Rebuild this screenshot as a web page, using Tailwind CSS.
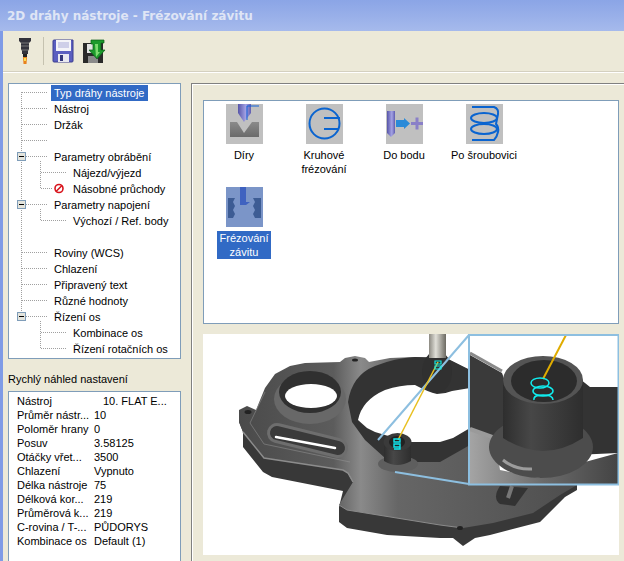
<!DOCTYPE html>
<html lang="cs">
<head>
    <meta charset="UTF-8">
    <title>2D dráhy nástroje - Frézování závitu</title>
    <script src="https://cdn.jsdelivr.net/npm/@tailwindcss/browser@4"></script>
</head>
<body class="bg-[#ece9d8]">
<div class="w-[624px] h-[561px] overflow-hidden flex flex-col bg-[#ece9d8] font-['Liberation_Sans',sans-serif] text-[11px] text-black">

    <!-- Title bar -->
    <div class="h-[31px] shrink-0 pl-[7px] flex items-center bg-gradient-to-b from-[#8ba5e6] via-[#98afe9] to-[#a6baec] font-['DejaVu_Sans',sans-serif] font-bold text-[12px] text-[#dfe5f5]">2D dráhy nástroje - Frézování závitu</div>

    <div class="flex-1 min-h-0 flex border-l-[3px] border-[#7f9be6]">
        <div class="flex-1 min-w-0 flex flex-col">

            <!-- Toolbar -->
            <div class="h-[41px] shrink-0 flex items-center border-b border-[#d4d0c0] shadow-[0_1px_0_#fff] pl-[15px]">
                <svg width="14" height="28" viewBox="0 0 14 28">
                    <path d="M1 1h12v3l-2 2v6l-1 2v3H4v-3l-1-2V6L1 4z" fill="#33333b"/>
                    <path d="M3 6h8M3 9h8M4 13h6" stroke="#777" stroke-width="1"/>
                    <path d="M5 17h4v3h-4z" fill="#222"/>
                    <path d="M5 20h4l-.5 7h-3z" fill="#e8821e"/>
                    <path d="M6 21h2v3H6z" fill="#f8e050"/>
                </svg>
                <div class="w-px h-[28px] bg-[#c5c2b0] ml-[11px] mr-[8px]"></div>
                <svg width="22" height="24" viewBox="0 0 22 24">
                    <path d="M1 2q0-1 1-1h19v21q0 1-1 1H2q-1 0-1-1z" fill="#5b5fc0" stroke="#3c3f90"/>
                    <rect x="4" y="1" width="15" height="11" fill="#f4f4f8"/>
                    <path d="M6 4h11M6 6h11M6 8h11" stroke="#a9aad8"/>
                    <rect x="6" y="15" width="11" height="8" fill="#e8e8f0"/>
                    <rect x="8" y="16" width="3" height="6" fill="#33367a"/>
                </svg>
                <svg class="ml-[8px]" width="24" height="25" viewBox="0 0 24 25">
                    <path d="M1 4h20v20H1z" fill="#2a2a2a"/>
                    <rect x="5" y="5" width="12" height="9" fill="#e4e4e4"/>
                    <rect x="6" y="17" width="10" height="7" fill="#8a8a8a"/>
                    <path d="M9 1h13v3l-3 0v7h4l-8 9-8-9h4V5H9z" fill="#1d9a2c" stroke="#0d5c18" stroke-width=".7"/>
                    <path d="M13 5h3v8h2l-4 5z" fill="#7ddc70"/>
                </svg>
            </div>

            <div class="flex-1 min-h-0 flex pt-[11px] pl-[5px]">

                <!-- Left column -->
                <div class="w-[173px] shrink-0 flex flex-col">
                    <div class="relative h-[276px] shrink-0 bg-white border border-[#7f9db9] pt-px leading-[16px]">
                        <svg class="absolute left-0 top-0" width="171" height="274" viewBox="9 84 171 274" fill="none">
                            <g stroke="#a0a0a0" stroke-dasharray="1 1">
                                <path d="M21.5 92V316"/>
                                <path d="M22 92.5H48M22 108.5H48M22 124.5H48M22 140.5H48M26 156.5H48M22 252.5H48M22 268.5H48M22 284.5H48M22 300.5H48M26 204.5H48M26 316.5H48"/>
                                <path d="M40.5 161V188M40.5 209V220M40.5 321V348"/>
                                <path d="M41 172.5H67M41 188.5H52M41 220.5H67M41 332.5H67M41 348.5H67"/>
                            </g>
                            <g>
                                <rect x="17.5" y="152.5" width="8" height="8" fill="#e4e4dc" stroke="#7f9db9"/>
                                <path d="M19 156.5h5" stroke="#000"/>
                                <rect x="17.5" y="200.5" width="8" height="8" fill="#e4e4dc" stroke="#7f9db9"/>
                                <path d="M19 204.5h5" stroke="#000"/>
                                <rect x="17.5" y="312.5" width="8" height="8" fill="#e4e4dc" stroke="#7f9db9"/>
                                <path d="M19 316.5h5" stroke="#000"/>
                            </g>
                            <circle cx="59" cy="188.5" r="4" stroke="#d8141c" stroke-width="1.6"/>
                            <path d="M56 191.5l6-6" stroke="#d8141c" stroke-width="1.6"/>
                        </svg>
                        <div class="relative h-[16px] pl-[42px]"><span class="inline-block px-[3px] bg-[#316ac5] text-white">Typ dráhy nástroje</span></div>
                        <div class="relative h-[16px] pl-[45px]">Nástroj</div>
                        <div class="relative h-[16px] pl-[45px]">Držák</div>
                        <div class="relative h-[16px] pl-[45px]"></div>
                        <div class="relative h-[16px] pl-[45px]">Parametry obrábění</div>
                        <div class="relative h-[16px] pl-[64px]">Nájezd/výjezd</div>
                        <div class="relative h-[16px] pl-[64px]">Násobné průchody</div>
                        <div class="relative h-[16px] pl-[45px]">Parametry napojení</div>
                        <div class="relative h-[16px] pl-[64px]">Výchozí / Ref. body</div>
                        <div class="relative h-[16px] pl-[45px]"></div>
                        <div class="relative h-[16px] pl-[45px]">Roviny (WCS)</div>
                        <div class="relative h-[16px] pl-[45px]">Chlazení</div>
                        <div class="relative h-[16px] pl-[45px]">Připravený text</div>
                        <div class="relative h-[16px] pl-[45px]">Různé hodnoty</div>
                        <div class="relative h-[16px] pl-[45px]">Řízení os</div>
                        <div class="relative h-[16px] pl-[64px]">Kombinace os</div>
                        <div class="relative h-[16px] pl-[64px]">Řízení rotačních os</div>
                    </div>

                    <div class="h-[32px] shrink-0 flex items-end pb-[4px]">Rychlý náhled nastavení</div>

                    <div class="flex-1 bg-white border border-b-0 border-[#7f9db9] pl-[8px] pt-[2px] leading-[14px] grid grid-cols-[77px_1fr] auto-rows-[14px]">
                        <div>Nástroj</div><div class="pl-[9px]">10. FLAT E...</div>
                        <div>Průměr nástr...</div><div>10</div>
                        <div>Poloměr hrany</div><div>0</div>
                        <div>Posuv</div><div>3.58125</div>
                        <div>Otáčky vřet...</div><div>3500</div>
                        <div>Chlazení</div><div>Vypnuto</div>
                        <div>Délka nástroje</div><div>75</div>
                        <div>Délková kor...</div><div>219</div>
                        <div>Průměrová k...</div><div>219</div>
                        <div>C-rovina / T-...</div><div>PŮDORYS</div>
                        <div>Kombinace os</div><div>Default (1)</div>
                    </div>
                </div>

                <!-- Right panel -->
                <div class="flex-1 min-w-0 ml-[10px] border-l border-t border-[#808080] shadow-[inset_1px_1px_0_#fff] pl-[11px] pt-[16px] pr-[5px] flex flex-col">
                    <div class="h-[224px] shrink-0 bg-white border border-[#7f9db9] pt-[3px] grid grid-cols-[80px_80px_80px_80px] auto-rows-[83px] leading-[14px] text-center">
                        <div class="flex flex-col items-center">
                            <svg width="37" height="40" viewBox="0 0 37 40">
                                <defs><linearGradient id="steel" x1="0" y1="0" x2="0" y2="1"><stop offset="0" stop-color="#8a8a8a"/><stop offset="1" stop-color="#6a6a6a"/></linearGradient>
                                <linearGradient id="toolg" x1="0" y1="0" x2="1" y2="0"><stop offset="0" stop-color="#5654a8"/><stop offset=".6" stop-color="#a4a2e4"/><stop offset="1" stop-color="#5f5db0"/></linearGradient></defs>
                                <rect width="37" height="40" fill="#c0c0c0"/>
                                <path d="M4 18h7l7 11 8-11h7v15H4z" fill="url(#steel)"/>
                                <path d="M12 0h13v9l-7 9-6-9z" fill="url(#toolg)"/>
                                <path d="M21 16V2h12" stroke="#1060d8" fill="none"/>
                            </svg>
                            <div class="mt-[4px]">Díry</div>
                        </div>
                        <div class="flex flex-col items-center">
                            <svg width="37" height="40" viewBox="0 0 37 40">
                                <rect width="37" height="40" fill="#c0c0c0"/>
                                <circle cx="18.5" cy="19.5" r="15" fill="none" stroke="#0a64d0" stroke-width="2"/>
                                <path d="M18 14h16M18 25h15" stroke="#0a64d0" stroke-width="2"/>
                            </svg>
                            <div class="mt-[4px]">Kruhové<br>frézování</div>
                        </div>
                        <div class="flex flex-col items-center">
                            <svg width="37" height="40" viewBox="0 0 37 40">
                                <rect width="37" height="40" fill="#c0c0c0"/>
                                <path d="M1 7h8v22l-4 4-4-4z" fill="url(#toolg)"/>
                                <path d="M10 16h8v-2l6 5.500-6 5.500v-2h-8z" fill="#2a8ad8"/>
                                <path d="M29.500 13.500h3v4.500h4.500v3h-4.500v4.500h-3v-4.500h-4.500v-3h4.500z" fill="#8a80c8"/>
                            </svg>
                            <div class="mt-[4px]">Do bodu</div>
                        </div>
                        <div class="flex flex-col items-center">
                            <svg width="37" height="40" viewBox="0 0 37 40" fill="none" stroke="#0a64d0" stroke-width="2">
                                <rect width="37" height="40" fill="#c0c0c0" stroke="none"/>
                                <path d="M6 3H28Q33 5 32 10T30 20Q33 23 32 28T28 36H6"/>
                                <ellipse cx="18" cy="14" rx="13" ry="5"/>
                                <ellipse cx="18" cy="25" rx="13" ry="5"/>
                            </svg>
                            <div class="mt-[4px]">Po šroubovici</div>
                        </div>
                        <div class="flex flex-col items-center">
                            <svg width="37" height="40" viewBox="0 0 37 40">
                                <rect width="37" height="40" fill="#7b95c8"/>
                                <path d="M14 0h6v15h4l-4 3h-6z" fill="#3f62c0"/>
                                <path d="M2 11h7l-2 4 2 4-2 4 2 4-2 4H2z" fill="#3d5c94"/>
                                <path d="M35 11h-8l2 4-2 4 2 4-2 4 2 4h-2 8z" fill="#3d5c94"/>
                            </svg>
                            <div class="mt-[4px] px-[3px] bg-[#316ac5] text-white">Frézování<br>závitu</div>
                        </div>
                    </div>

                    <!-- Part preview -->
                    <svg class="mt-[10px] shrink-0" width="416" height="221" viewBox="203 334 416 221">
                        <defs>
                            <linearGradient id="top" x1="0" y1="0" x2="1" y2="0">
                                <stop offset="0" stop-color="#4a4a4a"/><stop offset=".28" stop-color="#5c5c5c"/><stop offset=".36" stop-color="#8a8a8a"/><stop offset=".47" stop-color="#666"/><stop offset="1" stop-color="#4e4e4e"/>
                            </linearGradient>
                            <linearGradient id="post" x1="0" y1="0" x2="1" y2="0">
                                <stop offset="0" stop-color="#8c8a82"/><stop offset=".4" stop-color="#e0dfd8"/><stop offset="1" stop-color="#6c6a62"/>
                            </linearGradient>
                            <linearGradient id="floor" x1="0" y1="0" x2="1" y2="0">
                                <stop offset="0" stop-color="#a4a4a4"/><stop offset=".5" stop-color="#6a6a6a"/><stop offset="1" stop-color="#444"/>
                            </linearGradient>
                            <linearGradient id="wall" x1="0" y1="0" x2="1" y2="0">
                                <stop offset="0" stop-color="#2e2e2e"/><stop offset=".35" stop-color="#474747"/><stop offset="1" stop-color="#2e2e2e"/>
                            </linearGradient>
                            <clipPath id="zoomclip"><rect x="470" y="336" width="148" height="148"/></clipPath>
                        </defs>
                        <rect x="203" y="334" width="416" height="221" fill="#fff"/>

                        <!-- body side -->
                        <path d="M239 410V422L243 432V447L263 472L272 477L343 491L339 507V522L347 528L387 535L440 538H453L463 546L475 538L490 535L540 522L565 497L577 490V470H400L353 482L343 465L264 450Z" fill="#383838"/>
                        <!-- body top -->
                        <path d="M239 410L247 406L256 410L265 388L275 374L290 366L305 363L340 362L345 358L355 356L365 358L369 362L390 358L415 357L446 358L470 370L577 485L560 495L533 513L493 523L463 528L440 525L347 510L339 505L345 495L353 482L348 473L343 470L264 458L243 432L239 422Z" fill="url(#top)"/>
                        <path d="M243 432L264 458L343 470L348 473L353 482" fill="none" stroke="#8c8c8c" stroke-width="1.500"/>
                        <path d="M339 505L347 510L440 525L463 528" fill="none" stroke="#8a8a8a" stroke-width="1"/>
                        <path d="M265 392L250 423L264 444L350 462" fill="none" stroke="#999" stroke-width=".5"/>

                        <!-- lugs -->
                        <ellipse cx="248" cy="412" rx="3.500" ry="2" fill="#222"/>
                        <ellipse cx="355" cy="360" rx="3" ry="1.600" fill="#222"/>
                        <ellipse cx="359" cy="388" rx="3" ry="2" fill="#222"/>
                        <ellipse cx="460" cy="528" rx="3" ry="2" fill="#222"/>

                        <!-- small bore -->
                        <ellipse cx="310" cy="399" rx="36" ry="25" fill="#686868"/>
                        <ellipse cx="310" cy="392" rx="31" ry="21" fill="#303030"/>
                        <ellipse cx="311" cy="396" rx="26" ry="12" fill="#fff"/>

                        <!-- slot -->
                        <path d="M277 433L338 448" stroke="#6e6e6e" stroke-width="20" stroke-linecap="round"/>
                        <path d="M277 433L338 448" stroke="#3a3a3a" stroke-width="14" stroke-linecap="round"/>
                        <path d="M276 437L335 448" stroke="#fff" stroke-width="2.500" stroke-linecap="round"/>

                        <!-- main bore -->
                        <path d="M348 402Q352 375 375 366Q395 358 415 357L446 358L470 370V445L440 462H410L385 458L365 440L352 422Z" fill="#333"/>
                        <path d="M358 420Q362 400 385 390Q400 385 415 385Q428 392 437 394Q445 394 452 391L470 388V428L453 438L440 442H410L395 438L375 432L367 428Z" fill="#fff"/>

                        <!-- post in the bore -->
                        <ellipse cx="398" cy="464" rx="20" ry="8" fill="#5e5e5e"/>
                        <path d="M384 443h27v18q-14 8-27 0z" fill="url(#wall)"/>
                        <ellipse cx="397.500" cy="442" rx="14" ry="9" fill="#3a3a3a"/>
                        <ellipse cx="397" cy="442" rx="8" ry="6" fill="#222"/>

                        <!-- spindle -->
                        <ellipse cx="437" cy="372" rx="15" ry="21" fill="#303030"/>
                        <rect x="429" y="334" width="17" height="24" fill="url(#post)"/>

                        <!-- tool paths -->
                        <path d="M469 335L378 440M469 484L395 472" stroke="#8dbfe0" stroke-width="2" fill="none"/>
                        <path d="M438 362L398 440" stroke="#e8c020" stroke-width="1.500"/>
                        <path d="M394 439h6v3h-6zM394 444h6v3h-6zM394 449h6v-2" fill="none" stroke="#10e8f0" stroke-width="1.400"/>
                        <path d="M435 361h6v3h-6zM435 366h6v3h-6z" fill="none" stroke="#10e8e0" stroke-width="1.200"/>

                        <!-- second slot below the inset -->
                        <path d="M500 486Q492 498 500 504L515 506L528 488z" fill="#333"/>
                        <path d="M512 486L508 498" stroke="#777" stroke-width="4"/>

                        <!-- zoom inset -->
                        <g clip-path="url(#zoomclip)">
                            <rect x="470" y="336" width="148" height="148" fill="#fff"/>
                            <path d="M470 355L502 373L510 395V450L470 430Z" fill="#3a3a3a"/>
                            <path d="M575 375L590 387H618V453L575 455Z" fill="#333"/>
                            <path d="M470 428L495 437L500 470L540 478L585 462L618 453V484H470Z" fill="url(#floor)"/>
                            <path d="M470 353L502 371" stroke="#8a8a8a" stroke-width="3"/>
                            <path d="M470 429L495 438" stroke="#9a9a9a" stroke-width="4"/>
                            <ellipse cx="541" cy="447" rx="52" ry="31" fill="#4c4c4c"/>
                            <path d="M503 460Q515 470 532 469" fill="none" stroke="#9c9c9c" stroke-width="3"/>
                            <path d="M503 380H583V438Q543 464 503 438Z" fill="url(#wall)"/>
                            <ellipse cx="543" cy="380" rx="40" ry="24" fill="#545454"/>
                            <ellipse cx="544" cy="381" rx="33" ry="21" fill="#2c2c2c"/>
                            <path d="M566 335L543 379" stroke="#e0ac00" stroke-width="2"/>
                            <g fill="none" stroke="#10eef0" stroke-width="1.500">
                                <ellipse cx="540" cy="383" rx="9" ry="5"/>
                                <ellipse cx="543" cy="391" rx="10" ry="5"/>
                                <path d="M534 400Q533 395 543 395T553 400"/>
                            </g>
                        </g>
                        <rect x="469" y="335" width="149.500" height="149.500" fill="none" stroke="#8dbfe0" stroke-width="2"/>
                    </svg>
                </div>
            </div>
        </div>
    </div>
</div>
</body>
</html>
